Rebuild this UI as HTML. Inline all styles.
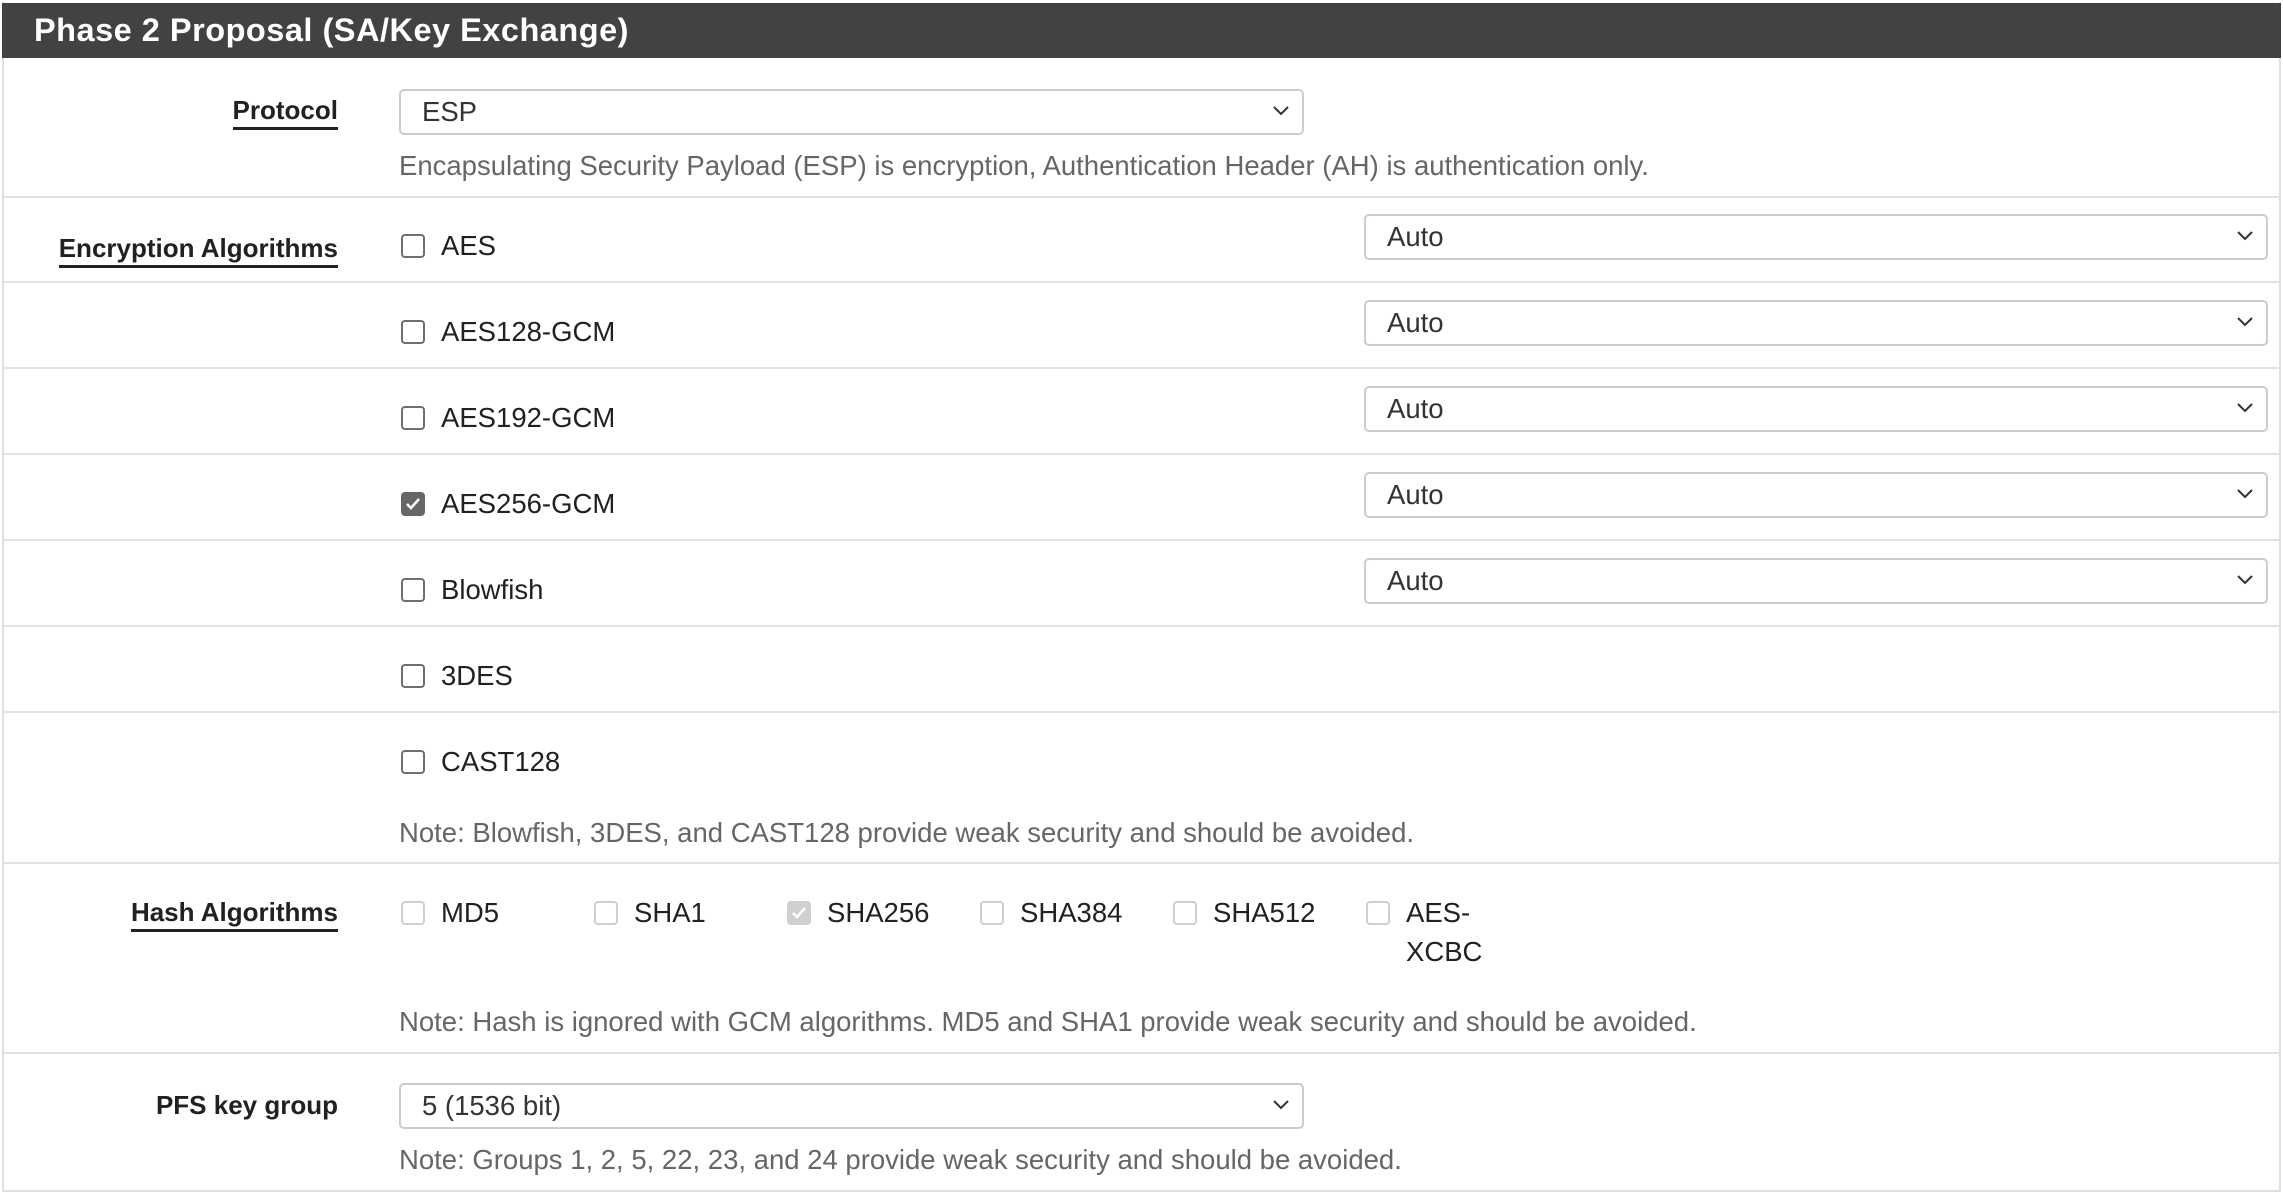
<!DOCTYPE html>
<html><head><meta charset="utf-8"><style>
*{box-sizing:border-box;margin:0;padding:0}
body{width:2283px;height:1195px;background:#fff;position:relative;overflow:hidden;font-family:"Liberation Sans",Arial,sans-serif;color:#212121}
.frame{position:absolute;left:2px;top:2px;width:2279px;height:1190px;border:2px solid #e0e0e0;border-top:none}
.hdr{position:absolute;left:2px;top:3px;width:2279px;height:55px;background:#424242;color:#fff;font-weight:bold;font-size:32.5px;line-height:55px;padding-left:32px;letter-spacing:0.5px}
.line{position:absolute;left:3px;width:2277px;height:2px;background:#e2e2e2}
.lbl{position:absolute;right:1945px;font-weight:bold;font-size:26px;line-height:30px;height:30px;color:#212121}
.lbl.u{border-bottom:3px solid #212121;line-height:32px;height:36px}
.t{position:absolute;font-size:27.5px;line-height:30px;height:30px;white-space:nowrap}
.help{color:#666}
.sel{position:absolute;height:46px;border:2px solid #ccc;border-radius:5px;font-size:27.5px;line-height:42px;padding-left:21px;color:#333}
.sel svg{position:absolute;right:12px;top:14px}
.cb{position:absolute;width:24px;height:24px;border:2px solid #6f6f6f;border-radius:4px;background:#fff}
.cb.d{border-color:#cfcfcf}
.cb.k{background:#666;border-color:#666}
.cb.dk{background:#cfcfcf;border-color:#cfcfcf}
.cb svg{position:absolute;left:2px;top:2px}
</style></head><body>
<div class="frame"></div>
<div class="hdr">Phase 2 Proposal (SA/Key Exchange)</div>

<div class="lbl u" style="top:94px">Protocol</div>
<div class="sel" style="left:399px;top:89px;width:905px">ESP<svg width="18" height="12" viewBox="0 0 18 12"><path d="M2 2l7 7 7-7" fill="none" stroke="#333" stroke-width="2"/></svg></div>
<div class="t help" style="left:399px;top:151px">Encapsulating Security Payload (ESP) is encryption, Authentication Header (AH) is authentication only.</div>
<div class="line" style="top:196px"></div>

<div class="lbl u" style="top:232px">Encryption Algorithms</div>

<div class="cb" style="left:401px;top:234px"></div><div class="t" style="left:441px;top:231px">AES</div>
<div class="sel" style="left:1364px;top:214px;width:904px">Auto<svg width="18" height="12" viewBox="0 0 18 12"><path d="M2 2l7 7 7-7" fill="none" stroke="#333" stroke-width="2"/></svg></div>
<div class="line" style="top:281px"></div>

<div class="cb" style="left:401px;top:320px"></div><div class="t" style="left:441px;top:317px">AES128-GCM</div>
<div class="sel" style="left:1364px;top:300px;width:904px">Auto<svg width="18" height="12" viewBox="0 0 18 12"><path d="M2 2l7 7 7-7" fill="none" stroke="#333" stroke-width="2"/></svg></div>
<div class="line" style="top:367px"></div>

<div class="cb" style="left:401px;top:406px"></div><div class="t" style="left:441px;top:403px">AES192-GCM</div>
<div class="sel" style="left:1364px;top:386px;width:904px">Auto<svg width="18" height="12" viewBox="0 0 18 12"><path d="M2 2l7 7 7-7" fill="none" stroke="#333" stroke-width="2"/></svg></div>
<div class="line" style="top:453px"></div>

<div class="cb k" style="left:401px;top:492px"><svg width="16" height="16" viewBox="0 0 16 16"><path d="M2 8l4 4 8-9" fill="none" stroke="#fff" stroke-width="2.5"/></svg></div><div class="t" style="left:441px;top:489px">AES256-GCM</div>
<div class="sel" style="left:1364px;top:472px;width:904px">Auto<svg width="18" height="12" viewBox="0 0 18 12"><path d="M2 2l7 7 7-7" fill="none" stroke="#333" stroke-width="2"/></svg></div>
<div class="line" style="top:539px"></div>

<div class="cb" style="left:401px;top:578px"></div><div class="t" style="left:441px;top:575px">Blowfish</div>
<div class="sel" style="left:1364px;top:558px;width:904px">Auto<svg width="18" height="12" viewBox="0 0 18 12"><path d="M2 2l7 7 7-7" fill="none" stroke="#333" stroke-width="2"/></svg></div>
<div class="line" style="top:625px"></div>

<div class="cb" style="left:401px;top:664px"></div><div class="t" style="left:441px;top:661px">3DES</div>
<div class="line" style="top:711px"></div>

<div class="cb" style="left:401px;top:750px"></div><div class="t" style="left:441px;top:747px">CAST128</div>
<div class="t help" style="left:399px;top:818px">Note: Blowfish, 3DES, and CAST128 provide weak security and should be avoided.</div>
<div class="line" style="top:862px"></div>

<div class="lbl u" style="top:896px">Hash Algorithms</div>
<div class="cb d" style="left:401px;top:901px"></div><div class="t" style="left:441px;top:898px">MD5</div>
<div class="cb d" style="left:594px;top:901px"></div><div class="t" style="left:634px;top:898px">SHA1</div>
<div class="cb dk" style="left:787px;top:901px"><svg width="16" height="16" viewBox="0 0 16 16"><path d="M2 8l4 4 8-9" fill="none" stroke="#fff" stroke-width="2.5"/></svg></div><div class="t" style="left:827px;top:898px">SHA256</div>
<div class="cb d" style="left:980px;top:901px"></div><div class="t" style="left:1020px;top:898px">SHA384</div>
<div class="cb d" style="left:1173px;top:901px"></div><div class="t" style="left:1213px;top:898px">SHA512</div>
<div class="cb d" style="left:1366px;top:901px"></div><div class="t" style="left:1406px;top:898px">AES-</div>
<div class="t" style="left:1406px;top:937px">XCBC</div>
<div class="t help" style="left:399px;top:1007px">Note: Hash is ignored with GCM algorithms. MD5 and SHA1 provide weak security and should be avoided.</div>
<div class="line" style="top:1052px"></div>

<div class="lbl" style="top:1090px">PFS key group</div>
<div class="sel" style="left:399px;top:1083px;width:905px">5 (1536 bit)<svg width="18" height="12" viewBox="0 0 18 12"><path d="M2 2l7 7 7-7" fill="none" stroke="#333" stroke-width="2"/></svg></div>
<div class="t help" style="left:399px;top:1145px">Note: Groups 1, 2, 5, 22, 23, and 24 provide weak security and should be avoided.</div>
</body></html>
